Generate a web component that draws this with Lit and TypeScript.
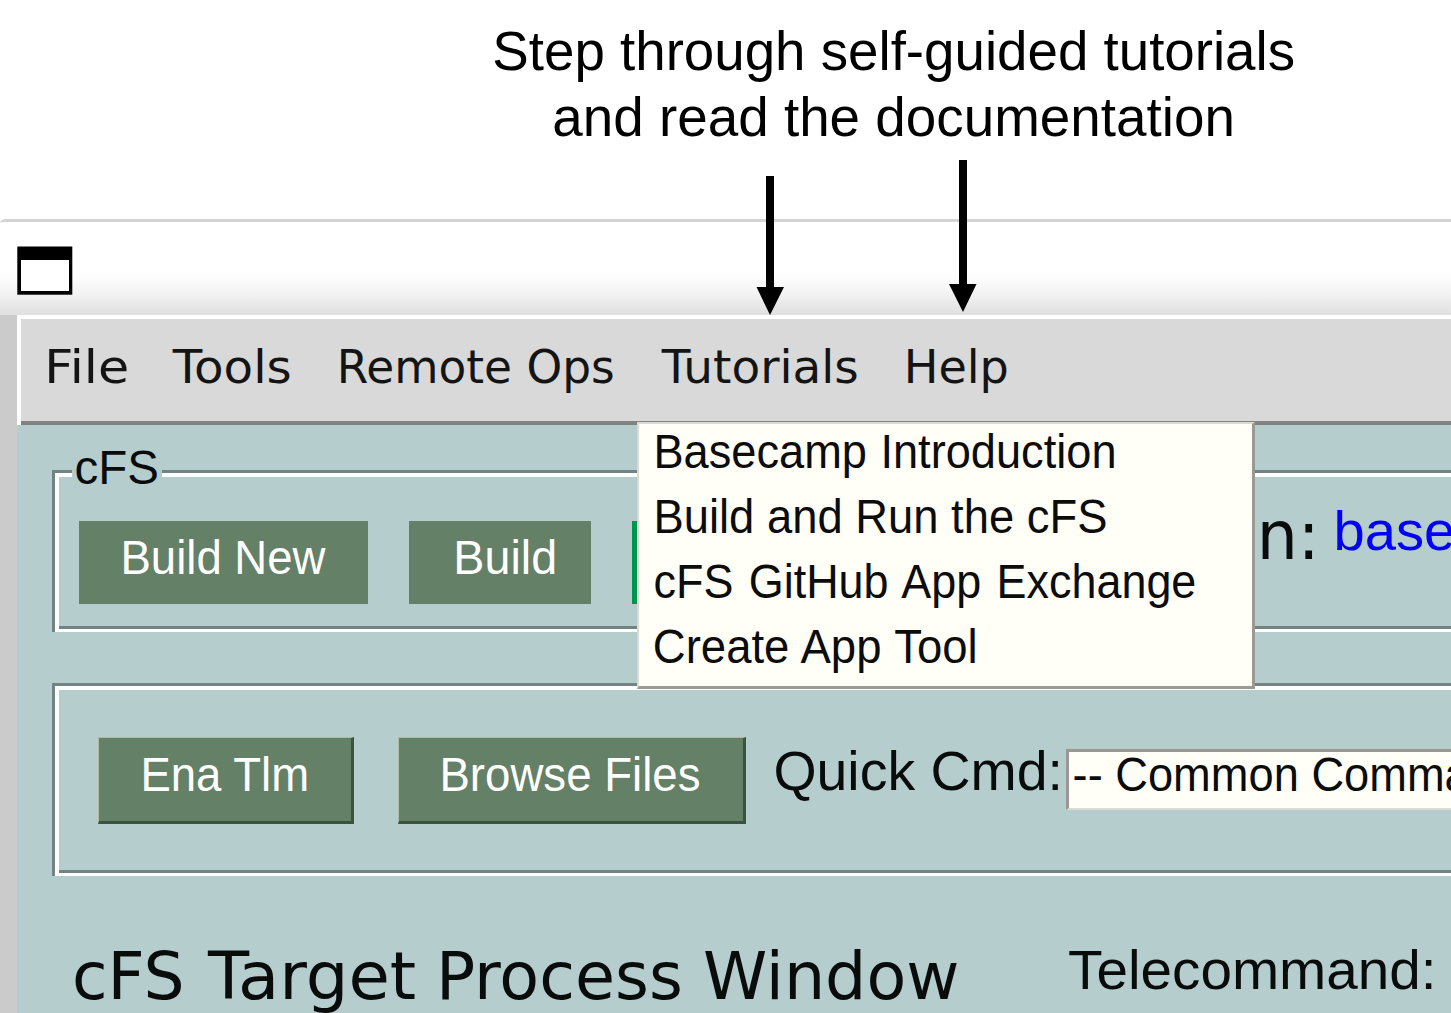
import { LitElement, html, css } from "lit";
import { customElement, property } from "lit/decorators.js";

const FAMILIES: Record<string, string> = {
  sans: '"Liberation Sans", Arial, sans-serif',
  dejavu: '"DejaVu Sans", Verdana, sans-serif',
};

const ctx = document.createElement("canvas").getContext("2d")!;

/** A single line of text whose visible glyphs span exactly `w` pixels. */
@customElement("fit-label")
class FitLabel extends LitElement {
  @property() text = "";
  @property() face = "sans";
  @property({ type: Number }) size = 47.5;
  @property({ type: Number }) w = 100;
  /** Extra pixels added at each space. */
  @property({ type: Number }) gap = 0;

  static styles = css`
    :host {
      display: block;
      flex: none;
      white-space: pre;
    }
    .box {
      display: block;
      height: 34px;
    }
    .glyphs {
      display: inline-block;
      line-height: 34px;
      transform-origin: 0 0;
    }
  `;

  render() {
    const family = FAMILIES[this.face];
    ctx.font = `1000px ${family}`;
    const m = ctx.measureText(this.text);
    const k = this.size / 1000;
    const left = -m.actualBoundingBoxLeft * k;
    const spaces = this.text.split(" ").length - 1;
    const ink = (m.actualBoundingBoxRight + m.actualBoundingBoxLeft) * k + spaces * this.gap;
    const s = this.w / ink;
    return html`<span class="box" style="width:${this.w}px"
      ><span
        class="glyphs"
        style="font:${this.size}px/34px ${family};word-spacing:${this.gap}px;transform:scaleX(${s.toFixed(4)}) translateX(${(-left).toFixed(2)}px)"
        >${this.text}</span
      ></span
    >`;
  }
}

@customElement("app-root")
class AppRoot extends LitElement {
  static styles = css`
    :host {
      display: block;
      position: relative;
      width: 1451px;
      height: 1013px;
      overflow: hidden;
      background: #fff;
      color: #000;
    }
    * {
      box-sizing: border-box;
    }
    .caption {
      height: 219px;
      padding: 34px 0 0 494px;
    }
    .caption .second {
      margin: 32px 0 0 60px;
    }
    .arrows {
      position: absolute;
      left: 740px;
      top: 150px;
      width: 260px;
      height: 170px;
    }
    .titlebar {
      height: 96px;
      padding: 24px 0 0 17px;
      border-top: 3px solid #d4d4d4;
      border-top-left-radius: 6px 4px;
      background: linear-gradient(#fff 0 56%, #f4f4f4 75%, #e0e0e0 100%);
    }
    .winicon {
      display: block;
    }
    .window {
      display: flex;
      height: 698px;
    }
    .edge {
      flex: none;
      width: 17px;
      background: #cbcbcb;
    }
    .content {
      flex: none;
      width: 1434px;
      background: #b6cdce;
      color: #0a0c0c;
    }
    .menubar {
      position: relative;
      display: flex;
      height: 110px;
      padding: 35px 0 0 31.5px;
      background: #d9d9d9;
      box-shadow: inset 4px 0 #fff, inset 0 4px #fff, inset 0 -4px #828282;
      color: #141414;
    }
    .tools {
      margin-left: 45.5px;
    }
    .remote {
      margin-left: 51px;
    }
    .tutorials {
      margin-left: 48px;
    }
    .help {
      margin-left: 51.5px;
    }
    .dropdown {
      position: absolute;
      left: 620px;
      top: 107px;
      width: 618px;
      height: 267px;
      padding: 10.5px 0 0 17.5px;
      background: #fffff7;
      border: solid #dcdad5;
      border-width: 2px 3px 3px 2px;
      border-right-color: #9a9a93;
      border-bottom-color: #9a9a93;
      display: flex;
      flex-direction: column;
      gap: 31.3px;
      z-index: 2;
      color: #0c0c0c;
    }
    .dropdown .round {
      margin-left: -1.5px;
    }
    .groove {
      margin-left: 35px;
      width: 1420px;
      padding: 3px 0 3px 3px;
      box-shadow: inset 3px 0 #728383, inset 0 3px #728383, inset 0 -3px #fff;
    }
    .groove-in {
      display: flex;
      height: 100%;
      box-shadow: inset 4px 0 #fff, inset 0 4px #fff, inset 0 -3px #728383;
    }
    .build-frame {
      position: relative;
      margin-top: 45px;
      height: 162px;
    }
    .legend {
      position: absolute;
      left: 20px;
      top: -22px;
      width: 90px;
      height: 40px;
      padding: 3px 0 0 4px;
      background: #b6cdce;
    }
    .build-frame .groove-in {
      padding-top: 48px;
      padding-left: 24px;
    }
    .btn {
      flex: none;
      display: flex;
      justify-content: center;
      height: 83px;
      padding-top: 19.5px;
      background: #648066;
      color: #fff;
    }
    .new {
      width: 289px;
      padding-left: 2px;
    }
    .build {
      width: 182px;
      margin-left: 41px;
      padding-left: 12px;
    }
    .run {
      width: 182px;
      margin-left: 41px;
      background: #00954f;
    }
    .version {
      margin: -2px 0 0 406px;
    }
    .link {
      margin: -7px 0 0 24px;
      color: #00f;
    }
    .cmd-frame {
      margin-top: 51px;
      height: 193px;
    }
    .cmd-frame .groove-in {
      padding: 51px 0 0 43px;
    }
    .raised {
      height: 87px;
      padding: 20px 0 0 2px;
      border: solid #b3b9a4;
      border-width: 1px 3px 3px 1px;
      border-right-color: #3c5240;
      border-bottom-color: #3c5240;
    }
    .ena {
      width: 256px;
    }
    .browse {
      width: 348px;
      margin-left: 44px;
      padding-left: 0;
    }
    .quick {
      margin: 17px 0 0 30px;
    }
    .combo {
      flex: none;
      width: 420px;
      height: 61px;
      margin: 12px 0 0 8px;
      padding: 5.5px 0 0 5px;
      background: #fffff7;
      border: solid #9b9893;
      border-width: 3px 0 2px 3px;
      border-bottom-color: #dcdcd6;
    }
    .footer {
      display: flex;
      padding: 84px 0 0 58px;
    }
    .title {
      display: flex;
      gap: 25px;
    }
    .process {
      margin-left: 1.5px;
    }
    .tele {
      margin: -7px 0 0 112px;
    }
  `;

  render() {
    return html`
      <div class="caption">
        <fit-label text="Step through self-guided tutorials" size="54.7" w="799.5"></fit-label>
        <fit-label class="second" text="and read the documentation" size="54.7" w="678"></fit-label>
      </div>
      <div class="titlebar">
        <svg class="winicon" width="56" height="49" viewBox="0 0 56 49">
          <rect x="0.3" y="0.5" width="55" height="48.2" />
          <rect x="4" y="14" width="48" height="31" fill="#fff" />
        </svg>
      </div>
      <div class="window">
        <div class="edge"></div>
        <div class="content">
          <div class="menubar">
            <fit-label face="dejavu" size="46" text="File" w="77.5"></fit-label>
            <fit-label class="tools" face="dejavu" size="46" text="Tools" w="118"></fit-label>
            <fit-label class="remote" face="dejavu" size="46" text="Remote Ops" w="272"></fit-label>
            <fit-label class="tutorials" face="dejavu" size="46" text="Tutorials" w="196"></fit-label>
            <fit-label class="help" face="dejavu" size="46" text="Help" w="99"></fit-label>
            <div class="dropdown">
              <fit-label text="Basecamp Introduction" gap="1" w="457"></fit-label>
              <fit-label text="Build and Run the cFS" w="448.5"></fit-label>
              <fit-label class="round" gap="3" text="cFS GitHub App Exchange" w="542"></fit-label>
              <fit-label class="round" gap="1" text="Create App Tool" w="323"></fit-label>
            </div>
          </div>
          <div class="groove build-frame">
            <div class="groove-in">
              <div class="btn new"><fit-label text="Build New" w="202"></fit-label></div>
              <div class="btn build"><fit-label text="Build" w="97.5"></fit-label></div>
              <div class="btn run"></div>
              <fit-label class="version" face="dejavu" size="68" text="on:" w="93"></fit-label>
              <fit-label class="link" size="56" text="base" w="116"></fit-label>
            </div>
            <div class="legend"><fit-label text="cFS" w="81"></fit-label></div>
          </div>
          <div class="groove cmd-frame">
            <div class="groove-in">
              <div class="btn raised ena"><fit-label text="Ena Tlm" w="163.5"></fit-label></div>
              <div class="btn raised browse"><fit-label text="Browse Files" w="256"></fit-label></div>
              <fit-label class="quick" size="56" text="Quick Cmd:" w="282"></fit-label>
              <div class="combo"><fit-label text="-- Common Comma" w="396"></fit-label></div>
            </div>
          </div>
          <div class="footer">
            <div class="title">
              <fit-label face="dejavu" size="66" text="cFS" w="107"></fit-label>
              <fit-label face="dejavu" size="66" text="Target" w="208"></fit-label>
              <fit-label class="process" face="dejavu" size="66" text="Process" w="238.5"></fit-label>
              <fit-label face="dejavu" size="66" text="Window" w="252"></fit-label>
            </div>
            <fit-label class="tele" size="56" text="Telecommand:" w="362.5"></fit-label>
          </div>
        </div>
      </div>
      <svg class="arrows" viewBox="740 150 260 170">
        <path d="M766 176h8v111h10l-14 28l-13.500-28H766z" />
        <path d="M959 160h8v124h9.500l-13.500 28l-14-28h10z" />
      </svg>
    `;
  }
}
